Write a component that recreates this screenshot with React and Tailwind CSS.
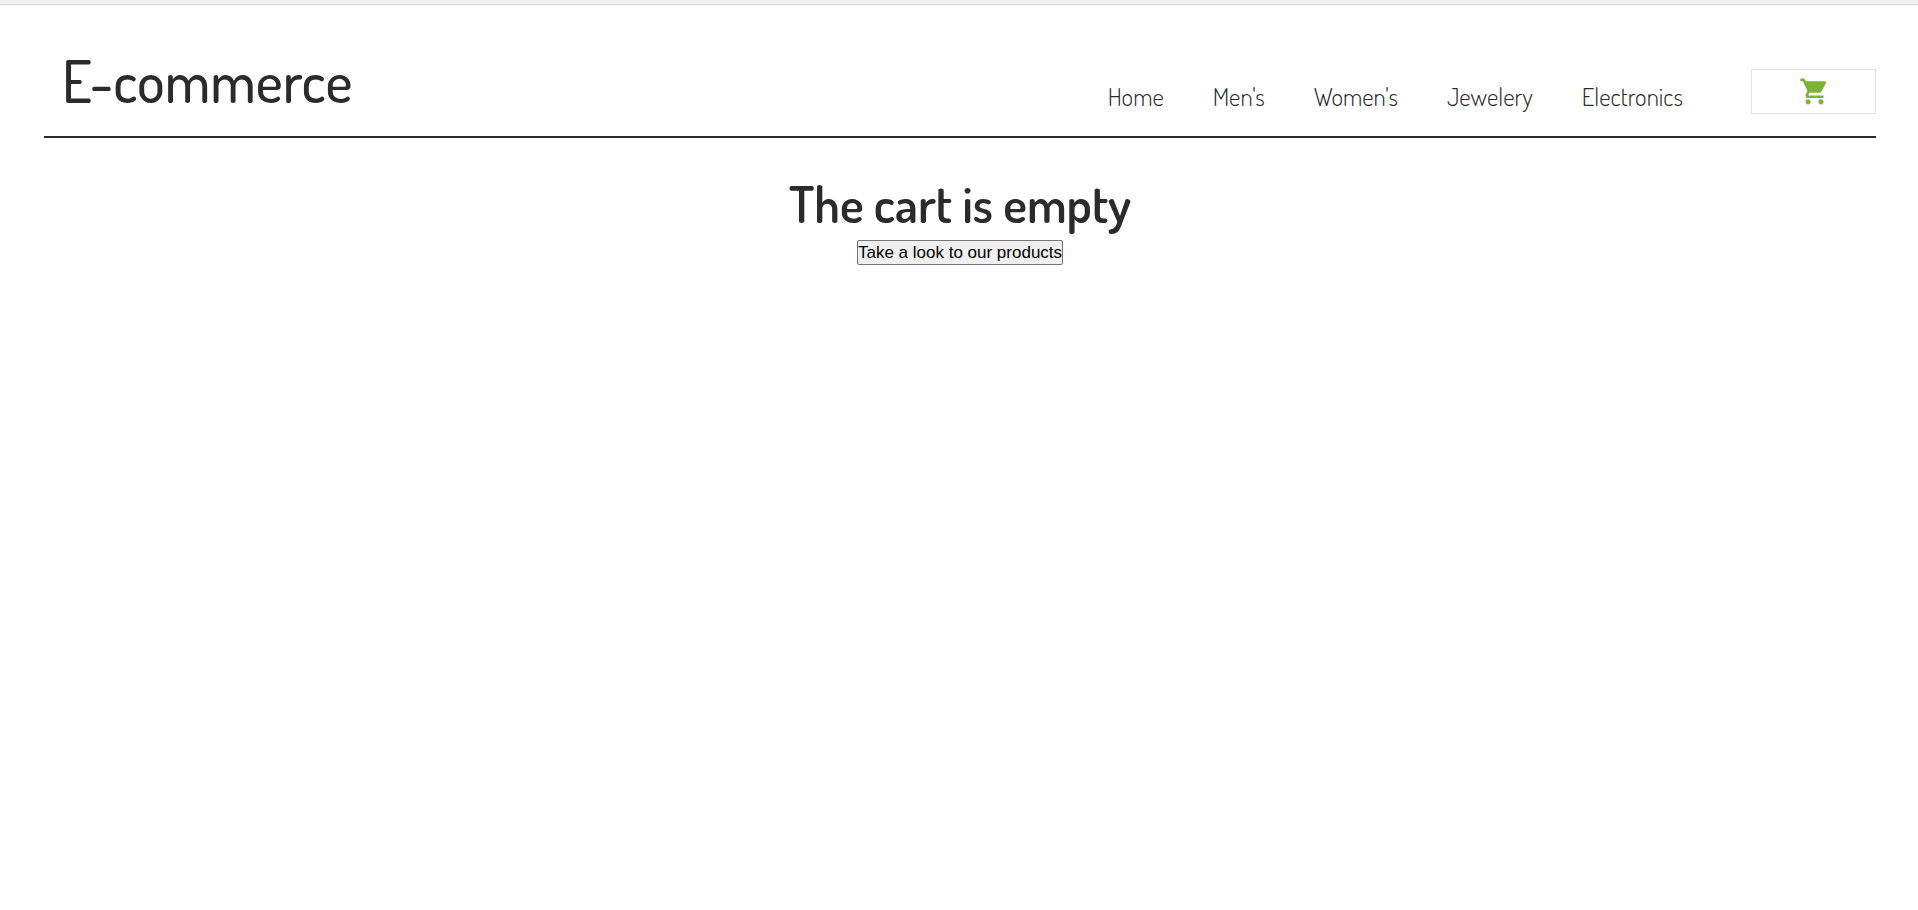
import { MdShoppingCart } from "react-icons/md";

const links = ["Home", "Men's", "Women's", "Jewelery", "Electronics"];

export default function App() {
  return (
    <div className="min-h-screen bg-white font-['Dosis','Lato',sans-serif] text-[#2b2b2b]">
      <div className="h-[5px] border-b border-[#d5d8dc] bg-[#f2f1f0]" />
      <div className="ml-11 mr-[42px]">
        <header className="flex h-[133px] items-end justify-between border-b-2 border-[#2b2b2b] pb-[22px] pl-[18px]">
          <a href="#home" className="text-[58px] font-medium leading-[68px]">
            E-commerce
          </a>
          <div className="flex items-end">
            <nav className="mr-[68px] flex gap-[49px] text-[25px] font-light leading-9">
              {links.map((label) => (
                <a key={label} href={"#" + label.toLowerCase()}>
                  {label}
                </a>
              ))}
            </nav>
            <a
              href="#cart"
              aria-label="Cart"
              className="flex h-[45px] w-[125px] items-center justify-center border border-[#e2e2e2] pb-px pl-0.5 text-[#7eb233]"
            >
              <MdShoppingCart size={31} />
            </a>
          </div>
        </header>
        <main className="flex flex-col items-center pt-[33px]">
          <h1 className="mb-[3px] text-[50px] font-semibold leading-[66px]">The cart is empty</h1>
          <button
            type="button"
            className="h-[25px] rounded-[2px] border border-[#767676] bg-[#efefef] font-['Liberation_Sans',Arial,sans-serif] text-[17px] leading-[22px] text-black"
          >
            Take a look to our products
          </button>
        </main>
      </div>
    </div>
  );
}
